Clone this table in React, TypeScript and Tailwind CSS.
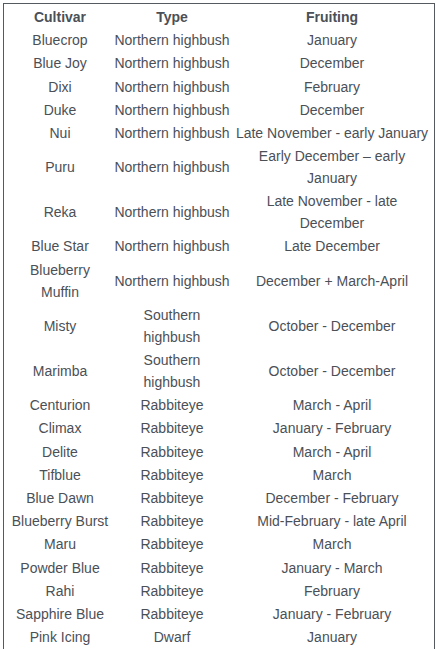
import React from "react";

type Row = { cultivar: string; type: string; fruiting: string };

const rows: Row[] = [
  { cultivar: "Bluecrop", type: "Northern highbush", fruiting: "January" },
  { cultivar: "Blue Joy", type: "Northern highbush", fruiting: "December" },
  { cultivar: "Dixi", type: "Northern highbush", fruiting: "February" },
  { cultivar: "Duke", type: "Northern highbush", fruiting: "December" },
  { cultivar: "Nui", type: "Northern highbush", fruiting: "Late November - early January" },
  { cultivar: "Puru", type: "Northern highbush", fruiting: "Early December – early January" },
  { cultivar: "Reka", type: "Northern highbush", fruiting: "Late November - late December" },
  { cultivar: "Blue Star", type: "Northern highbush", fruiting: "Late December" },
  { cultivar: "Blueberry Muffin", type: "Northern highbush", fruiting: "December + March-April" },
  { cultivar: "Misty", type: "Southern highbush", fruiting: "October - December" },
  { cultivar: "Marimba", type: "Southern highbush", fruiting: "October - December" },
  { cultivar: "Centurion", type: "Rabbiteye", fruiting: "March - April" },
  { cultivar: "Climax", type: "Rabbiteye", fruiting: "January - February" },
  { cultivar: "Delite", type: "Rabbiteye", fruiting: "March - April" },
  { cultivar: "Tifblue", type: "Rabbiteye", fruiting: "March" },
  { cultivar: "Blue Dawn", type: "Rabbiteye", fruiting: "December - February" },
  { cultivar: "Blueberry Burst", type: "Rabbiteye", fruiting: "Mid-February - late April" },
  { cultivar: "Maru", type: "Rabbiteye", fruiting: "March" },
  { cultivar: "Powder Blue", type: "Rabbiteye", fruiting: "January - March" },
  { cultivar: "Rahi", type: "Rabbiteye", fruiting: "February" },
  { cultivar: "Sapphire Blue", type: "Rabbiteye", fruiting: "January - February" },
  { cultivar: "Pink Icing", type: "Dwarf", fruiting: "January" },
];

// cell padding per column keeps the text centres where the original has them
const c1 = "pl-[6px] pr-[2px] py-[0.6px] text-center align-middle";
const c2 = "px-[2px] py-[0.6px] text-center align-middle";
const c3 = "pl-[2px] pr-[4px] py-[0.6px] text-center align-middle";

export default function App() {
  return (
    <div className="bg-white w-[436px] h-[649px] pt-[3px] pl-[3px]">
      <div className="w-[432px] border border-[#555a61] pt-[1.4px] pb-[0.2px]">
        <table
          className="w-full table-fixed border-collapse text-[14px] leading-[22px] text-[#4b5057]"
          style={{ fontFamily: '"Liberation Sans", Arial, sans-serif' }}
        >
          <colgroup>
            <col className="w-[108px]" />
            <col className="w-[120px]" />
            <col />
          </colgroup>
          <thead>
            <tr className="font-bold">
              <th className={c1}>Cultivar</th>
              <th className={c2}>Type</th>
              <th className={c3}>Fruiting</th>
            </tr>
          </thead>
          <tbody>
            {rows.map((row) => (
              <tr key={row.cultivar}>
                <td className={c1}>{row.cultivar}</td>
                <td className={c2}>{row.type}</td>
                <td className={c3}>{row.fruiting}</td>
              </tr>
            ))}
          </tbody>
        </table>
      </div>
    </div>
  );
}
